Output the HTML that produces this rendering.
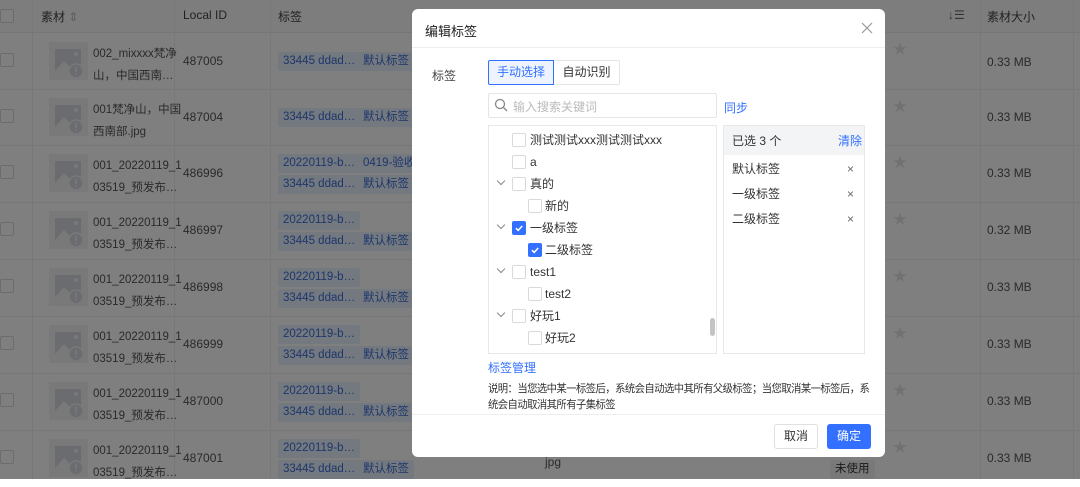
<!DOCTYPE html>
<html><head><meta charset="utf-8"><style>
*{box-sizing:border-box;margin:0;padding:0}
body{width:1080px;height:479px;overflow:hidden;position:relative;background:#fff;font-family:"Liberation Sans","Noto Sans CJK SC",sans-serif;color:#333;font-size:12px}
.abs{position:absolute}
.row{position:absolute;left:0;width:1080px;height:57px;border-top:1px solid #eee}
.vl{position:absolute;top:0;width:1px;height:479px;background:#f0f0f0}
.cb{position:absolute;width:14px;height:14px;border:1px solid #d9d9d9;border-radius:2px;background:#fff}
.thumb{position:absolute;left:49px;width:39px;height:38px;background:#f2f3f5}
.tag{position:absolute;height:19px;line-height:19px;padding:0 5px;background:#e8f0fe;color:#3a6fd8;font-size:11.5px;border-radius:2px}
.nm{position:absolute;left:93px;width:80px;white-space:nowrap;line-height:22px;font-size:11.5px;color:#555}
.ov{position:absolute;inset:0;background:rgba(0,0,0,0.5)}
.modal{position:absolute;left:412px;top:9px;width:473px;height:448px;background:#fff;border-radius:6px;overflow:hidden}
.ti{position:absolute;font-size:12px;color:#333;line-height:16px}
.ck{background:#3370ff;border-color:#3370ff}
.chev{position:absolute;width:6px;height:6px;border-right:1px solid #888;border-bottom:1px solid #888;transform:rotate(45deg)}
.st{position:absolute;left:893px;top:6px;color:#e3e3e3;font-size:14px}
</style></head><body>
<svg width="0" height="0" style="position:absolute"><defs><symbol id="pic" viewBox="0 0 39 38"><rect x="6" y="7" width="26" height="22" fill="#d5d9e0"/><path d="M6 29L15 19L21 25L25 21L32 27V29Z" fill="#f2f3f5"/><circle cx="27" cy="12" r="2" fill="#f2f3f5"/><circle cx="27" cy="29" r="7" fill="#d5d9e0" stroke="#f2f3f5" stroke-width="1.5"/><rect x="26.2" y="24.5" width="1.6" height="5.5" fill="#f2f3f5"/><rect x="26.2" y="31.2" width="1.6" height="1.6" fill="#f2f3f5"/></symbol></defs></svg>
<div class="abs" style="left:0;top:0;width:1080px;height:32px;background:#fafafa"></div>
<div class="cb" style="left:0;top:9px"></div>
<div class="abs" style="left:41px;top:8px;font-size:12px;color:#444">素材 <span style="color:#bbb">⇕</span></div>
<div class="abs" style="left:183px;top:8px;color:#444">Local ID</div>
<div class="abs" style="left:278px;top:8px;color:#444">标签</div>
<div class="abs" style="left:948px;top:8px;color:#666">↓☰</div>
<div class="abs" style="left:987px;top:8px;color:#444">素材大小</div>
<div class="vl" style="left:32px"></div><div class="vl" style="left:174px"></div><div class="vl" style="left:270px"></div><div class="vl" style="left:980px"></div><div class="vl" style="left:1073px"></div>

<div class="row" style="top:32px"><div class="cb" style="left:0;top:20px"></div><svg class="thumb" style="top:9px"><use href="#pic"/></svg><div class="nm" style="top:10px">002_mixxxx梵净<br>山，中国西南…</div><div class="abs" style="left:183px;top:21px;color:#555">487005</div><div class="tag" style="left:278px;top:19px">33445 ddad…</div><div class="tag" style="left:358px;top:19px">默认标签</div><div class="st">★</div><div class="abs" style="left:987px;top:22px;color:#555">0.33 MB</div></div>
<div class="row" style="top:89px"><div class="cb" style="left:0;top:19px"></div><svg class="thumb" style="top:8px"><use href="#pic"/></svg><div class="nm" style="top:9px">001梵净山，中国<br>西南部.jpg</div><div class="abs" style="left:183px;top:20px;color:#555">487004</div><div class="tag" style="left:278px;top:18px">33445 ddad…</div><div class="tag" style="left:358px;top:18px">默认标签</div><div class="st">★</div><div class="abs" style="left:987px;top:20px;color:#555">0.33 MB</div></div>
<div class="row" style="top:145px"><div class="cb" style="left:0;top:19px"></div><svg class="thumb" style="top:8px"><use href="#pic"/></svg><div class="nm" style="top:9px">001_20220119_1<br>03519_预发布…</div><div class="abs" style="left:183px;top:20px;color:#555">486996</div><div class="tag" style="left:278px;top:8px">20220119-b…</div><div class="tag" style="left:358px;top:8px">0419-验收</div><div class="tag" style="left:278px;top:29px">33445 ddad…</div><div class="tag" style="left:358px;top:29px">默认标签</div><div class="st">★</div><div class="abs" style="left:987px;top:20px;color:#555">0.33 MB</div></div>
<div class="row" style="top:202px"><div class="cb" style="left:0;top:19px"></div><svg class="thumb" style="top:8px"><use href="#pic"/></svg><div class="nm" style="top:9px">001_20220119_1<br>03519_预发布…</div><div class="abs" style="left:183px;top:20px;color:#555">486997</div><div class="tag" style="left:278px;top:8px">20220119-b…</div><div class="tag" style="left:278px;top:29px">33445 ddad…</div><div class="tag" style="left:358px;top:29px">默认标签</div><div class="st">★</div><div class="abs" style="left:987px;top:20px;color:#555">0.32 MB</div></div>
<div class="row" style="top:259px"><div class="cb" style="left:0;top:19px"></div><svg class="thumb" style="top:8px"><use href="#pic"/></svg><div class="nm" style="top:9px">001_20220119_1<br>03519_预发布…</div><div class="abs" style="left:183px;top:20px;color:#555">486998</div><div class="tag" style="left:278px;top:8px">20220119-b…</div><div class="tag" style="left:278px;top:29px">33445 ddad…</div><div class="tag" style="left:358px;top:29px">默认标签</div><div class="st">★</div><div class="abs" style="left:987px;top:20px;color:#555">0.33 MB</div></div>
<div class="row" style="top:316px"><div class="cb" style="left:0;top:19px"></div><svg class="thumb" style="top:8px"><use href="#pic"/></svg><div class="nm" style="top:9px">001_20220119_1<br>03519_预发布…</div><div class="abs" style="left:183px;top:20px;color:#555">486999</div><div class="tag" style="left:278px;top:8px">20220119-b…</div><div class="tag" style="left:278px;top:29px">33445 ddad…</div><div class="tag" style="left:358px;top:29px">默认标签</div><div class="st">★</div><div class="abs" style="left:987px;top:20px;color:#555">0.33 MB</div></div>
<div class="row" style="top:373px"><div class="cb" style="left:0;top:19px"></div><svg class="thumb" style="top:8px"><use href="#pic"/></svg><div class="nm" style="top:9px">001_20220119_1<br>03519_预发布…</div><div class="abs" style="left:183px;top:20px;color:#555">487000</div><div class="tag" style="left:278px;top:8px">20220119-b…</div><div class="tag" style="left:278px;top:29px">33445 ddad…</div><div class="tag" style="left:358px;top:29px">默认标签</div><div class="st">★</div><div class="abs" style="left:987px;top:20px;color:#555">0.33 MB</div></div>
<div class="row" style="top:430px"><div class="cb" style="left:0;top:19px"></div><svg class="thumb" style="top:8px"><use href="#pic"/></svg><div class="nm" style="top:9px">001_20220119_1<br>03519_预发布…</div><div class="abs" style="left:183px;top:20px;color:#555">487001</div><div class="tag" style="left:278px;top:8px">20220119-b…</div><div class="tag" style="left:278px;top:29px">33445 ddad…</div><div class="tag" style="left:358px;top:29px">默认标签</div><div class="st">★</div><div class="abs" style="left:545px;top:24px;color:#555">jpg</div><div class="tag" style="left:830px;top:29px;background:#f2f2f2;color:#333">未使用</div><div class="abs" style="left:987px;top:20px;color:#555">0.33 MB</div></div>

<div class="ov"></div>

<div class="modal">
 <div class="abs" style="left:13px;top:12px;font-size:13px;color:#222">编辑标签</div>
 <svg class="abs" style="left:449px;top:13px" width="12" height="12"><path d="M1 1L11 11M11 1L1 11" stroke="#999" stroke-width="1.2"/></svg>
 <div class="abs" style="left:0;top:38px;width:473px;height:1px;background:#eee"></div>
 <div class="abs" style="left:20px;top:58px;color:#444">标签</div>
 <div class="abs" style="left:76px;top:51px;width:66px;height:25px;border:1px solid #3370ff;background:#eef4ff;color:#3370ff;text-align:center;line-height:23px;border-radius:2px 0 0 2px">手动选择</div>
 <div class="abs" style="left:142px;top:51px;width:66px;height:25px;border:1px solid #e5e5e5;border-left:none;color:#333;text-align:center;line-height:23px;border-radius:0 2px 2px 0">自动识别</div>
 <div class="abs" style="left:76px;top:84px;width:229px;height:25px;border:1px solid #e5e5e5;border-radius:2px"></div>
 <svg class="abs" style="left:82px;top:89px" width="14" height="14"><circle cx="6" cy="6" r="4.5" fill="none" stroke="#888" stroke-width="1.3"/><path d="M9.5 9.5L13 13" stroke="#888" stroke-width="1.3"/></svg>
 <div class="abs" style="left:101px;top:89px;color:#bbb">输入搜索关键词</div>
 <div class="abs" style="left:312px;top:90px;color:#3370ff">同步</div>
 <div class="abs" style="left:76px;top:116px;width:229px;height:229px;border:1px solid #e8e8e8"></div>
 <div class="abs" style="left:298px;top:309px;width:5px;height:18px;background:#c4c4c4;border-radius:3px"></div>
 <div class="cb" style="left:100px;top:124px"></div><div class="ti" style="left:118px;top:123px">测试测试xxx测试测试xxx</div>
 <div class="cb" style="left:100px;top:146px"></div><div class="ti" style="left:118px;top:145px">a</div>
 <div class="chev" style="left:86px;top:169px"></div><div class="cb" style="left:100px;top:168px"></div><div class="ti" style="left:118px;top:167px">真的</div>
 <div class="cb" style="left:116px;top:190px"></div><div class="ti" style="left:133px;top:189px">新的</div>
 <div class="chev" style="left:86px;top:213px"></div><div class="cb ck" style="left:100px;top:212px"></div><svg class="abs" style="left:100px;top:212px" width="14" height="14"><path d="M4 7.2L6.2 9.4L10.2 5" fill="none" stroke="#fff" stroke-width="1.5"/></svg><div class="ti" style="left:118px;top:211px">一级标签</div>
 <div class="cb ck" style="left:116px;top:234px"></div><svg class="abs" style="left:116px;top:234px" width="14" height="14"><path d="M4 7.2L6.2 9.4L10.2 5" fill="none" stroke="#fff" stroke-width="1.5"/></svg><div class="ti" style="left:133px;top:233px">二级标签</div>
 <div class="chev" style="left:86px;top:257px"></div><div class="cb" style="left:100px;top:256px"></div><div class="ti" style="left:118px;top:255px">test1</div>
 <div class="cb" style="left:116px;top:278px"></div><div class="ti" style="left:133px;top:277px">test2</div>
 <div class="chev" style="left:86px;top:301px"></div><div class="cb" style="left:100px;top:300px"></div><div class="ti" style="left:118px;top:299px">好玩1</div>
 <div class="cb" style="left:116px;top:322px"></div><div class="ti" style="left:133px;top:321px">好玩2</div>
 <div class="abs" style="left:311px;top:116px;width:142px;height:229px;border:1px solid #e8e8e8"></div>
 <div class="abs" style="left:312px;top:117px;width:140px;height:29px;background:#f3f4f6"></div>
 <div class="ti" style="left:320px;top:124px">已选 3 个</div><div class="ti" style="left:426px;top:124px;color:#3370ff">清除</div>
 <div class="ti" style="left:320px;top:152px">默认标签</div><div class="ti" style="left:435px;top:152px;color:#666">×</div>
 <div class="ti" style="left:320px;top:177px">一级标签</div><div class="ti" style="left:435px;top:177px;color:#666">×</div>
 <div class="ti" style="left:320px;top:202px">二级标签</div><div class="ti" style="left:435px;top:202px;color:#666">×</div>
 <div class="ti" style="left:76px;top:351px;color:#3370ff">标签管理</div>
 <div class="abs" style="left:76px;top:373px;font-size:11px;line-height:15.5px;color:#333;white-space:nowrap;letter-spacing:-0.6px;transform:scaleX(0.94);transform-origin:0 0">说明：当您选中某一标签后，系统会自动选中其所有父级标签；当您取消某一标签后，系<br>统会自动取消其所有子集标签</div>
 <div class="abs" style="left:0;top:405px;width:473px;height:1px;background:#eee"></div>
 <div class="abs" style="left:362px;top:415px;width:44px;height:25px;border:1px solid #e0e0e0;border-radius:3px;text-align:center;line-height:23px;color:#333">取消</div>
 <div class="abs" style="left:415px;top:415px;width:44px;height:25px;background:#3370ff;border-radius:3px;text-align:center;line-height:25px;color:#fff">确定</div>
</div>
</body></html>
